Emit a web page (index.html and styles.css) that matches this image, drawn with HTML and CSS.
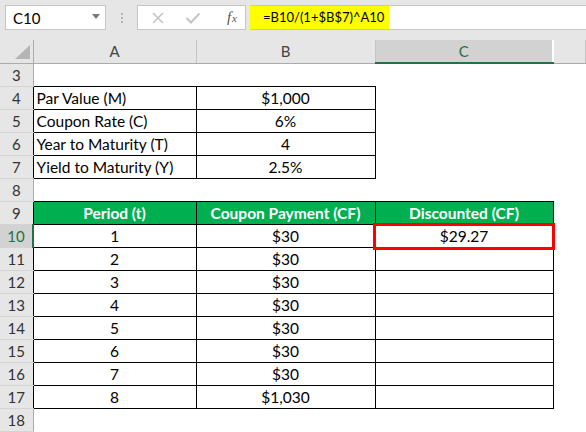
FILE: index.html
```html
<!DOCTYPE html>
<html lang="en">
<head>
    <meta charset="UTF-8">
    <title>Discounted cash flow sheet</title>
    <link rel="stylesheet" href="styles.css">
</head>
<body>

    <!-- name box + formula bar -->
    <div class="toolbar">
        <div class="name-box">
            <span>C10</span>
            <svg class="drop" width="8" height="5" viewBox="0 0 8 5"><polygon points="0,0 8,0 4,5" fill="#7a7a7a"/></svg>
        </div>
        <div class="grip"><i></i><i></i><i></i></div>
        <div class="fx-box">
            <svg width="14" height="14" viewBox="0 0 14 14"><path d="M2 2 L12 12 M12 2 L2 12" stroke="#c4c4c4" stroke-width="1.6" fill="none"/></svg>
            <svg width="16" height="14" viewBox="0 0 16 14"><path d="M1.5 7 L6 11.5 L14.5 2.5" stroke="#c4c4c4" stroke-width="2" fill="none"/></svg>
            <span class="fx">f<sub>x</sub></span>
        </div>
        <div class="formula">
            <span class="hl">=B10/(1+$B$7)^A10</span>
        </div>
    </div>

    <table class="sheet">
        <colgroup>
            <col class="w-rh"><col class="w-a"><col class="w-b"><col class="w-c"><col>
        </colgroup>
        <thead>
            <tr>
                <th class="corner"><svg width="33" height="22" viewBox="0 0 33 22"><polygon points="15,19 30,19 30,5" fill="#b5b5b5"/></svg></th>
                <th>A</th>
                <th>B</th>
                <th class="sel">C</th>
                <th></th>
            </tr>
        </thead>
        <tbody>
            <tr><th class="rh">3</th><td></td><td></td><td></td><td></td></tr>
            <tr><th class="rh edge">4</th><td class="b lbl">Par Value (M)</td><td class="b">$1,000</td><td></td><td></td></tr>
            <tr><th class="rh edge">5</th><td class="b lbl">Coupon Rate (C)</td><td class="b">6%</td><td></td><td></td></tr>
            <tr><th class="rh edge">6</th><td class="b lbl">Year to Maturity (T)</td><td class="b">4</td><td></td><td></td></tr>
            <tr><th class="rh edge">7</th><td class="b lbl">Yield to Maturity (Y)</td><td class="b">2.5%</td><td></td><td></td></tr>
            <tr><th class="rh">8</th><td></td><td></td><td></td><td></td></tr>
            <tr class="head"><th class="rh edge">9</th><td class="b">Period (t)</td><td class="b">Coupon Payment (CF)</td><td class="b">Discounted (CF)</td><td></td></tr>
            <tr><th class="rh sel-row">10</th><td class="b">1</td><td class="b">$30</td><td class="b active">$29.27</td><td></td></tr>
            <tr><th class="rh edge">11</th><td class="b">2</td><td class="b">$30</td><td class="b"></td><td></td></tr>
            <tr><th class="rh edge">12</th><td class="b">3</td><td class="b">$30</td><td class="b"></td><td></td></tr>
            <tr><th class="rh edge">13</th><td class="b">4</td><td class="b">$30</td><td class="b"></td><td></td></tr>
            <tr><th class="rh edge">14</th><td class="b">5</td><td class="b">$30</td><td class="b"></td><td></td></tr>
            <tr><th class="rh edge">15</th><td class="b">6</td><td class="b">$30</td><td class="b"></td><td></td></tr>
            <tr><th class="rh edge">16</th><td class="b">7</td><td class="b">$30</td><td class="b"></td><td></td></tr>
            <tr><th class="rh edge">17</th><td class="b">8</td><td class="b">$1,030</td><td class="b"></td><td></td></tr>
            <tr><th class="rh">18</th><td></td><td></td><td></td><td></td></tr>
        </tbody>
    </table>

</body>
</html>
```

FILE: styles.css
```css
body {
    margin: 0;
    background-color: #ffffff;
    font-family: Lato, "Open Sans", sans-serif;
    font-size: 15.5px;
    color: #000;
    width: 586px;
    height: 432px;
    overflow: hidden;
}

/* top bar */
.toolbar {
    display: flex;
    align-items: flex-start;
    height: 40px;
    padding: 5px 0 0 5px;
    box-sizing: border-box;
    background-color: #e6e6e6;
    font-size: 15px;
}

.name-box {
    display: flex;
    align-items: center;
    justify-content: space-between;
    width: 101px;
    height: 25px;
    box-sizing: border-box;
    padding: 0 5px 0 7px;
    background-color: #fff;
    border: 1px solid #c6c6c6;
}

.drop {
    margin-top: -2px;
}

.grip {
    width: 31px;
    height: 25px;
    display: flex;
    flex-direction: column;
    align-items: center;
    justify-content: center;
    gap: 2px;
}

.grip i {
    display: block;
    width: 2px;
    height: 2px;
    background-color: #b4b4b4;
}

.fx-box {
    display: flex;
    align-items: center;
    width: 109px;
    height: 25px;
    box-sizing: border-box;
    padding: 0 8px 0 13px;
    gap: 20px;
    background-color: #fff;
    border: 1px solid #c6c6c6;
}

.fx {
    font-family: "Liberation Serif", serif;
    font-style: italic;
    font-size: 15px;
    color: #555;
    margin-left: 6px;
}

.fx sub {
    font-size: 11px;
    vertical-align: 0;
    margin-left: 1px;
}

.formula {
    flex: 1;
    height: 25px;
    box-sizing: border-box;
    margin-left: 4px;
    background-color: #fff;
    border-top: 1px solid #c6c6c6;
    border-bottom: 1px solid #c6c6c6;
}

.hl {
    display: inline-block;
    width: 139px;
    box-sizing: border-box;
    height: 23px;
    line-height: 23px;
    padding-left: 13px;
    font-size: 13px;
    background-color: #ffff00;
}

/* grid */
.sheet {
    border-collapse: collapse;
    table-layout: fixed;
    width: 586px;
}

.w-rh { width: 33px; }
.w-a { width: 163px; }
.w-b { width: 179px; }
.w-c { width: 178px; }

.sheet tr {
    height: 23px;
}

.sheet th,
.sheet td {
    padding: 0;
    text-align: center;
    white-space: nowrap;
    overflow: visible;
}

.sheet thead th {
    height: 22px;
    font-size: 15px;
    font-weight: normal;
    color: #444;
    background-color: #e6e6e6;
    border-right: 1px solid #c4c4c4;
    border-bottom: 1px solid #ababab;
}

.sheet thead th.corner {
    border-right: 1px solid #ababab;
}

.corner svg {
    display: block;
}

.sheet thead th.sel {
    background-color: #d2d2d2;
    color: #217346;
    border-bottom: 2px solid #217346;
    border-right: 2px solid #fff;
}

.rh {
    font-size: 15px;
    font-weight: normal;
    color: #333;
    background-color: #e6e6e6;
    border-right: 1px solid #ababab;
    border-bottom: 1px solid #d4d4d4;
}

.rh.edge {
    border-right-color: #000;
}

.rh.sel-row {
    background-color: #d2d2d2;
    color: #217346;
    border-right: 2px solid #217346;
}

td.b {
    border: 1px solid #000;
}

td.lbl {
    text-align: left;
    padding-left: 3px;
}

tr.head td.b {
    background-color: #00b050;
    color: #fff;
    font-weight: bold;
}

td.active {
    position: relative;
}

td.active::after {
    content: "";
    position: absolute;
    left: -3px;
    top: -2px;
    right: -2px;
    bottom: -3px;
    border: 3px solid #ff0000;
}
```
